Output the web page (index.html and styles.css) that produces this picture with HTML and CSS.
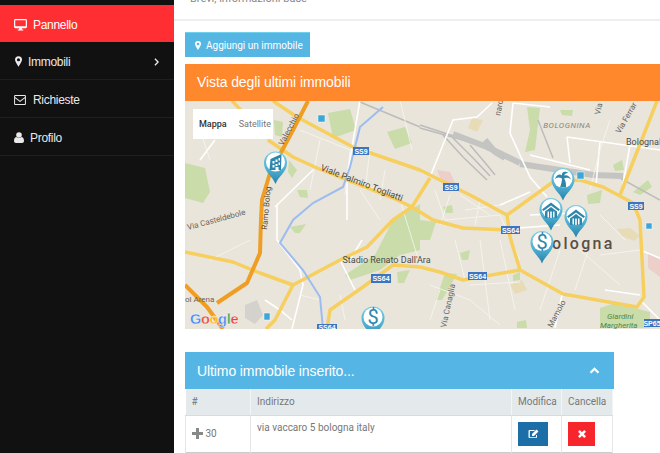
FILE: index.html
```html
<!DOCTYPE html>
<html lang="it">
<head>
<meta charset="utf-8">
<title>Pannello</title>
<link rel="stylesheet" href="styles.css">
</head>
<body>
<svg class="defs" width="0" height="0">
  <defs>
    <linearGradient id="pinfill" x1="0" y1="0" x2="0" y2="1">
      <stop offset="0" stop-color="#7ccde6"/>
      <stop offset="0.55" stop-color="#4fb0d2"/>
      <stop offset="1" stop-color="#2681a8"/>
    </linearGradient>
    <g id="pin">
      <path class="pin-body" d="M0 0C-3-8-11.500-12-11.500-21A11.500 11.500 0 0 1 11.500-21C11.500-12 3-8 0 0Z"/>
      <circle class="pin-face" cx="0" cy="-22" r="9.500"/>
    </g>
    <g id="house">
      <path class="pin-glyph" d="M-9-21L0-28L9-21L7.500-19.500L0-25L-7.500-19.500Z"/>
      <path class="pin-glyph" d="M-6-19L0-23.500L6-19V-12.500H3.500V-19H2V-12.500H.8V-19H-.8V-12.500H-2V-19H-3.500V-12.500H-6Z"/>
    </g>
  </defs>
</svg>
<div class="layout">
  <nav class="sidebar">
    <a class="nav-item active">
      <svg class="nav-icon monitor" viewBox="0 0 14 13"><path d="M1.500 0H12.500A1.500 1.500 0 0 1 14 1.500V8.500A1.500 1.500 0 0 1 12.500 10H8.500V11.500H10V12.500H4V11.500H5.500V10H1.500A1.500 1.500 0 0 1 0 8.500V1.500A1.500 1.500 0 0 1 1.500 0ZM1.300 1.300V7.800H12.700V1.300Z" fill-rule="evenodd"/></svg>
      <span>Pannello</span>
    </a>
    <a class="nav-item">
      <svg class="nav-icon marker" viewBox="0 0 8 12"><path d="M4 0A4 4 0 0 1 8 4C8 6 5.500 9.500 4 12C2.500 9.500 0 6 0 4A4 4 0 0 1 4 0ZM4 2.200A1.800 1.800 0 1 0 4 5.800A1.800 1.800 0 1 0 4 2.200Z" fill-rule="evenodd"/></svg>
      <span class="grow">Immobili</span>
      <svg class="angle" viewBox="0 0 6 10"><path d="M1 1L5 5L1 9"/></svg>
    </a>
    <a class="nav-item">
      <svg class="nav-icon envelope" viewBox="0 0 13 11"><path d="M1.200 0H11.800A1.200 1.200 0 0 1 13 1.200V9.800A1.200 1.200 0 0 1 11.800 11H1.200A1.200 1.200 0 0 1 0 9.800V1.200A1.200 1.200 0 0 1 1.200 0ZM1.100 1.100V2.200L6.500 6.300L11.900 2.200V1.100ZM1.100 3.600V9.900H11.900V3.600L6.500 7.700Z" fill-rule="evenodd"/></svg>
      <span>Richieste</span>
    </a>
    <a class="nav-item">
      <svg class="nav-icon user" viewBox="0 0 10 11"><circle cx="5" cy="3" r="2.800"/><path d="M0 9C0 6.500 1.200 5 2.500 5C3.200 5.700 4 6 5 6C6 6 6.800 5.700 7.500 5C8.800 5 10 6.500 10 9C10 10.300 9.200 11 8 11H2C.8 11 0 10.300 0 9Z"/></svg>
      <span>Profilo</span>
    </a>
  </nav>
  <main class="content">
    <header class="page-head"><p>Brevi, informazioni base</p></header>
    <div class="body-wrap">
      <a class="add-btn">
        <svg class="add-icon" viewBox="0 0 8 12"><path d="M4 0A4 4 0 0 1 8 4C8 6 5.500 9.500 4 12C2.500 9.500 0 6 0 4A4 4 0 0 1 4 0ZM4 2.200A1.800 1.800 0 1 0 4 5.800A1.800 1.800 0 1 0 4 2.200Z" fill-rule="evenodd"/></svg>
        Aggiungi un immobile
      </a>
      <section class="map-card">
        <h2 class="map-title">Vista degli ultimi immobili</h2>
        <div class="map">
          <svg class="map-svg" viewBox="185 101 475 228" width="475" height="228">
            <rect class="land" x="185" y="101" width="475" height="228"/>
            <!-- parks -->
            <path class="park" d="M185 163L205 168L210 192L203 203L185 198Z"/>
            <path class="park" d="M328 113L350 109L356 130L333 138Z"/>
            <path class="park" d="M387 132L405 127L412 143L395 149Z"/>
            <path class="park" d="M274 120L283 122L282 137L275 135Z"/>
            <path class="park" d="M289 160L297 170L292 178L288 172Z"/>
            <path class="park" d="M297 190L307 190L308 198L300 197Z"/>
            <path class="park" d="M290 227L306 224L300 233L295 233Z"/>
            <path class="park" d="M345 275L375 255L392 222L420 204L420 250L400 255L380 270L350 280Z"/>
            <path class="park" d="M527 107L540 108L535 150L525 152L530 130Z"/>
            <path class="park" d="M560 110L573 110L572 116L562 115Z"/>
            <path class="park" d="M613 165L622 160L624 170L615 171Z"/>
            <path class="park" d="M633 192L648 180L652 187L640 195Z"/>
            <path class="park" d="M587 195L602 190L600 203L588 204Z"/>
            <path class="park" d="M443 207L452 205L453 213L446 213Z"/>
            <path class="park" d="M420 220L436 222L430 240L420 240Z"/>
            <path class="park" d="M460 253L470 250L468 260L462 260Z"/>
            <path class="park" d="M397 272L410 270L404 283L398 283Z"/>
            <path class="park" d="M445 273L457 274L448 290L442 300L436 300Z"/>
            <path class="park" d="M600 308L615 303L650 312L650 328H600Z"/>
            <path class="park" d="M517 322L526 320L527 328H517Z"/>
            <path class="park" d="M513 275L520 272L520 280L513 281Z"/>
            <path class="sand" d="M472 118L483 120L477 132L468 128Z"/>
            <path class="pink" d="M437 170L450 172L455 183L447 187L440 178Z"/>
            <path class="pink" d="M648 253L660 260V277L648 268Z"/>
            <path class="sand" d="M617 229L630 228L640 236L634 241L622 236Z"/>
            <path class="sand" d="M510 285L522 280L527 290L515 294Z"/>
            <path class="gray" d="M245 305L257 300L263 315L255 324L245 318Z"/>
            <!-- rail -->
            <g class="rail">
              <path d="M360 102L420 127"/>
              <path d="M420 125L487 147L520 162L593 175L623 175"/>
              <path d="M420 128L470 142L530 165L620 178L660 200"/>
              <path d="M443 135L463 157L487 180"/>
              <path d="M453 138L475 160L490 176"/>
              <path d="M470 145L487 165L495 175"/>
              <path d="M538 120L553 158"/>
            </g>
            <path class="rail-wide" d="M453 134L487 147L520 163"/>
            <path class="rail-wide" d="M520 164L593 175L623 176"/>
            <path class="rail-wide" d="M485 140L495 152L505 158"/>
            <!-- minor roads -->
            <g class="minor">
              <path d="M430 177L453 120L477 117L492 103"/>
              <path d="M513 103L510 133L530 177L547 197"/>
              <path d="M513 103L550 107"/>
              <path d="M567 137L660 150"/>
              <path d="M567 137L570 163M600 141L596 185M630 145L622 190"/>
              <path d="M530 155L590 170"/>
              <path d="M500 205L530 192M530 215L575 213M490 230L560 225"/>
              <path d="M360 100L347 177L347 220"/>
              <path d="M275 207L313 170"/>
              <path d="M277 205L277 240L300 270L303 285L292 329"/>
              <path d="M340 260L355 290M350 260L362 240M265 300L280 310L292 320"/>
              <path d="M640 250L660 258M640 300L660 320M605 290L640 295"/>
              <path d="M562 295L555 328M200 160L215 140"/>
            </g>
            <g class="thin">
              <path d="M400 200L420 265M435 190L445 220L500 215L520 260M430 285L470 300L500 325M560 250L540 310"/>
              <path d="M480 240L490 320M500 240L515 310M455 240L465 280M580 250L620 285M600 215L625 240"/>
              <path d="M300 130L350 150L345 195M320 140L310 190M355 180L400 200M370 150L365 190M385 170L380 200"/>
              <path d="M400 100L412 150M450 195L440 225M480 200L475 225M600 150L590 190M610 120L600 150"/>
              <path d="M200 130L210 160M210 260L250 240M340 295L345 320M300 295L320 300M440 290L430 320"/>
              <path d="M465 210L500 205M460 195L490 215M360 190L380 220M590 245L575 290M600 255L640 250M470 285L520 282"/>
            </g>
            <!-- main roads -->
            <g class="road">
              <path d="M232 101L270 140"/>
              <path d="M273 101L297 117L353 147L420 170L470 195L507 215L553 182L580 180L603 187L633 203L640 220L644 297L637 307L563 294L520 270L510 237L507 215"/>
              <path d="M268 140L293 157L317 168L347 180L393 198L412 207L430 178"/>
              <path d="M657 101L620 195"/>
              <path d="M412 207L393 220L367 247L340 260L293 285L260 273L233 262L185 252"/>
              <path d="M412 207L433 220L463 228L510 230"/>
              <path d="M520 270L463 280L440 272L420 267L393 265L363 287L330 310L327 329"/>
              <path d="M293 285L275 320L266 329"/>
            </g>
            <!-- motorway -->
            <g class="motorway">
              <path d="M308 101L293 130L270 173L262 200L261 220L260 253L247 283L217 303"/>
              <path d="M185 285L207 307L223 329"/>
            </g>
            <path class="river" d="M383 107L360 127L350 167L343 187L313 203L293 220L280 243L303 270L320 297L323 329"/>
            <!-- shields -->
            <g class="shield">
              <rect x="353" y="147" width="16" height="8"/>
              <rect x="443" y="183" width="16" height="8"/>
              <rect x="501" y="226" width="19" height="8"/>
              <rect x="371" y="274" width="20" height="9"/>
              <rect x="468" y="272" width="19" height="8"/>
              <rect x="317" y="324" width="20" height="8"/>
              <rect x="628" y="202" width="16" height="8"/>
              <rect x="644" y="319" width="16" height="8"/>
            </g>
            <g class="shield-text">
              <text x="361" y="153.500">SS9</text>
              <text x="451" y="189.500">SS9</text>
              <text x="510.500" y="232.500">SS64</text>
              <text x="381" y="281">SS64</text>
              <text x="477.500" y="278.500">SS64</text>
              <text x="327" y="330">SS64</text>
              <text x="636" y="208.500">SS9</text>
              <text x="652" y="325.500">SP65</text>
            </g>
            <rect class="bus" x="318" y="115" width="7" height="7"/>
            <rect class="bus" x="577" y="172" width="7" height="7"/>
            <rect class="bus" x="646" y="223" width="6" height="6"/>
            <rect class="bus" x="264" y="313" width="6" height="7"/>
            <!-- labels -->
            <text class="lbl" transform="translate(320 170) rotate(21)">Viale Palmiro Togliatti</text>
            <text class="lbl small" transform="translate(188 230) rotate(-15)">Via Casteldebole</text>
            <text class="lbl small halo" transform="translate(267 230) rotate(-85)">Ramo Bolog</text>
            <text class="lbl small" transform="translate(283 146) rotate(-62)">Valecchio</text>
            <text class="lbl" x="342.500" y="263">Stadio Renato Dall'Ara</text>
            <text class="lbl small" x="185" y="302">ol Arena</text>
            <text class="lbl" x="626" y="145">BolognaF</text>
            <text class="lbl district" x="567" y="128">BOLOGNINA</text>
            <text class="lbl small" transform="translate(500 116) rotate(-78)">nard</text>
            <text class="lbl small" transform="translate(600 115) rotate(-78)">Via</text>
            <text class="lbl small" transform="translate(620 134) rotate(-60)">Via Ferrar</text>
            <text class="lbl small" transform="translate(552 328) rotate(-62)">Mamolo</text>
            <text class="lbl small" transform="translate(446 328) rotate(-78)">Via Canaglia</text>
            <text class="lbl garden" x="607" y="319">Giardini</text>
            <text class="lbl garden" x="600" y="328">Margherita</text>
            <text class="city" x="552" y="249">ologna</text>
            <text class="google" x="190" y="324"><tspan class="g-blue">G</tspan><tspan class="g-red">o</tspan><tspan class="g-yel">o</tspan><tspan class="g-blue">g</tspan><tspan class="g-grn">l</tspan><tspan class="g-red">e</tspan></text>
            <!-- pins -->
            <g transform="translate(275.500 184)">
              <use href="#pin"/>
              <path class="pin-glyph" d="M-6-14L-5-25L6-30L5.500-14L3-14V-17H0V-14ZM-3-23V-20.500H-1V-23ZM0-24.500V-22H2V-24.500ZM3-26V-23.500H4.500V-26ZM-3-19V-16.500H-1V-19ZM0-20V-18H2V-20ZM3-21.500V-19H4.500V-21.500Z" fill-rule="evenodd"/>
            </g>
            <g transform="translate(563 200.500)">
              <use href="#pin"/>
              <path class="pin-glyph" d="M-1-22C-4-24-7-23-8-21C-7-26-3-27-1-25C-2-29 3-30 6-27C4-28 2-27 1-25C4-26 7-24 8-21C6-23 3-23 1-22C3-20 3-16 3-13H-3C-2-16-1-19-1-22Z"/>
            </g>
            <g transform="translate(551 230.500)"><use href="#pin"/><use href="#house"/></g>
            <g transform="translate(576 237.500)"><use href="#pin"/><use href="#house"/></g>
            <g transform="translate(542 263.500)">
              <use href="#pin"/>
              <text class="dollar" x="0" y="-15">$</text>
            </g>
            <g transform="translate(373 339)">
              <use href="#pin"/>
              <text class="dollar" x="0" y="-15">$</text>
            </g>
          </svg>
          <div class="map-type">
            <span class="map-type-on">Mappa</span>
            <span class="map-type-off">Satellite</span>
          </div>
        </div>
      </section>
      <section class="panel">
        <div class="panel-head">
          <h2>Ultimo immobile inserito...</h2>
          <svg class="chev" viewBox="0 0 12 8"><path d="M1.500 6.500L6 2L10.500 6.500"/></svg>
        </div>
        <table class="grid">
          <thead>
            <tr><th class="c-id">#</th><th class="c-addr">Indirizzo</th><th class="c-act">Modifica</th><th class="c-del">Cancella</th></tr>
          </thead>
          <tbody>
            <tr>
              <td><svg class="plus" viewBox="0 0 11 11"><path d="M4 0H7V4H11V7H7V11H4V7H0V4H4Z"/></svg> 30</td>
              <td class="addr">via vaccaro 5 bologna italy</td>
              <td><a class="sq sq-blue"><svg viewBox="0 0 11 10"><path d="M1.500 1H6.500V2H1.800V8.200H8V6H9V8A1 1 0 0 1 8 9H1.500A1 1 0 0 1 .5 8V2A1 1 0 0 1 1.500 1Z"/><path d="M8.500 .5L10.500 2.500L6 7H4V5Z"/></svg></a></td>
              <td><a class="sq sq-red"><svg viewBox="0 0 8 8"><path d="M1.800 0L4 2.200L6.200 0L8 1.800L5.800 4L8 6.200L6.200 8L4 5.800L1.800 8L0 6.200L2.200 4L0 1.800Z"/></svg></a></td>
            </tr>
          </tbody>
        </table>
      </section>
    </div>
  </main>
</div>
</body>
</html>
```
FILE: styles.css
```css
* { box-sizing: border-box; }
html, body { margin: 0; padding: 0; height: 453px; overflow: hidden; background: #fff; }
body { font-family: "Liberation Sans", Arial, sans-serif; }
.defs { position: absolute; }
.layout { display: flex; width: 660px; height: 453px; overflow: hidden; }

.sidebar { flex: 0 0 174px; background: #111; padding-top: 5px; }
.nav-item { display: flex; align-items: center; height: 38px; padding: 2px 14px 0; color: #e9e9e9; font-size: 12px; letter-spacing: -0.3px; border-bottom: 1px solid #1f1f1f; }
.nav-item.active { height: 37px; background: #ff2e33; color: #fff; border-bottom: 0; }
.nav-icon { fill: currentColor; flex: none; }
.monitor { width: 13px; height: 12px; margin-right: 6px; }
.marker { width: 7px; height: 11px; margin: 0 6px 0 1px; }
.envelope { width: 12px; height: 10px; margin-right: 7px; }
.user { width: 10px; height: 11px; margin-right: 6px; }
.grow { flex: 1; }
.angle { width: 5px; height: 8px; fill: none; stroke: #eee; stroke-width: 1.6; margin-right: 1px; }

.content { flex: 1; min-width: 0; overflow: hidden; }
.page-head { height: 21px; border-bottom: 2px solid #eeeeee; overflow: hidden; padding-left: 16px; }
.page-head p { margin: -9px 0 0; font-size: 11px; line-height: 16px; color: #888; font-family: Roboto, sans-serif; }
.body-wrap { padding: 11px 0 0 11px; width: 486px; }

.add-btn { display: flex; align-items: center; width: 125px; height: 25px; padding-left: 10px; background: #55b6e4; color: #fff; font: 400 10px Roboto, sans-serif; border-top: 1px solid #6fd0ee; }
.add-icon { width: 6px; height: 9px; margin-right: 5px; fill: #fff; }

.map-card { margin-top: 7px; }
.map-title { margin: 0; height: 37px; padding-left: 12px; background: #ff872c; color: #fff; font: 400 14px/37px "Liberation Sans", Arial, sans-serif; letter-spacing: -0.1px; }
.map { position: relative; height: 228px; overflow: hidden; }
.map-svg { display: block; }
.map-type { position: absolute; left: 8px; top: 8px; width: 80px; height: 30px; background: #fff; display: flex; align-items: center; font: 9px Roboto, sans-serif; }
.map-type-on { margin-left: 6px; color: #333; font-weight: 500; }
.map-type-off { margin-left: 12px; color: #777; }

.land { fill: #e9e5db; }
.park { fill: #c9dcaa; }
.sand { fill: #e8dcb6; }
.pink { fill: #ebcfc8; }
.gray { fill: #d4d2cc; }
.rail path { fill: none; stroke: #bcbcbc; stroke-width: 1.500; }
.rail-wide { fill: none; stroke: #c4c4c2; stroke-width: 6; }
.minor path { fill: none; stroke: #fff; stroke-width: 1.600; }
.thin path { fill: none; stroke: #f8f6f0; stroke-width: 0.800; }
.road path { fill: none; stroke: #f6cf5f; stroke-width: 3.500; stroke-linejoin: round; }
.motorway path { fill: none; stroke: #f09d24; stroke-width: 4; stroke-linejoin: round; }
.river { fill: none; stroke: #9dbcef; stroke-width: 2; }
.shield rect { fill: #3d74bd; }
.shield-text text { fill: #fff; font: 700 7px "Liberation Sans", sans-serif; text-anchor: middle; }
.bus { fill: #3ba6d8; stroke: #fff; stroke-width: 0.5; }
.lbl { font: 9px Roboto, sans-serif; fill: #4c4c48; }
.lbl.small { font-size: 8px; fill: #66645e; }
.lbl.halo { fill: #5a4a30; }
.lbl.district { font-size: 8px; fill: #8a8478; letter-spacing: 0.5px; text-anchor: middle; font-style: italic; }
.lbl.garden { font-size: 8px; fill: #4f8a4a; font-style: italic; }
.city { font: 500 16px Roboto, sans-serif; letter-spacing: 2.300px; fill: #5a5040; }
.google { font: 700 14.500px "Liberation Sans", sans-serif; letter-spacing: -0.300px; stroke: #fff; stroke-width: 0.300px; }
.g-blue { fill: #4285f4; }
.g-red { fill: #ea4335; }
.g-yel { fill: #fbbc05; }
.g-grn { fill: #34a853; }
.pin-body { fill: url(#pinfill); }
.pin-face { fill: #fff; }
.pin-glyph { fill: #2f86ab; }
.dollar { font: 400 20px Roboto, sans-serif; fill: #2f86ab; text-anchor: middle; }

.panel { margin-top: 23px; width: 429px; }
.panel-head { display: flex; align-items: center; justify-content: space-between; height: 37px; padding: 0 14px 0 12px; background: #55b6e6; color: #fff; }
.panel-head h2 { margin: 0; font: 400 14px "Liberation Sans", Arial, sans-serif; letter-spacing: -0.1px; }
.chev { width: 11px; height: 7px; fill: none; stroke: #fff; stroke-width: 2.600; }
.grid { width: 428px; border-collapse: collapse; table-layout: fixed; font: 10px Roboto, sans-serif; color: #777; border-bottom: 1px solid #ccc; }
.grid th { height: 26px; background: #e4eaec; font-weight: 400; text-align: left; padding: 0 6px; border-right: 1px solid #f2f5f6; border-bottom: 1px solid #d8dcdc; }
.grid td { height: 37px; padding: 0 6px; border-left: 1px solid #e4e6e8; vertical-align: middle; }
.grid td:last-child { border-right: 1px solid #e4e6e8; }
.grid td.addr { vertical-align: top; padding-top: 6px; }
.c-id { width: 65px; }
.c-act { width: 50px; }
.c-del { width: 51px; }
.plus { width: 11px; height: 11px; fill: #888; vertical-align: -2px; }
.sq { display: flex; align-items: center; justify-content: center; height: 24px; }
.sq-blue { width: 30px; background: #1b6ea6; }
.sq-blue svg { width: 11px; height: 10px; fill: #fff; }
.sq-red { width: 27px; background: #f7262d; }
.sq-red svg { width: 8px; height: 8px; fill: #fff; }
```
